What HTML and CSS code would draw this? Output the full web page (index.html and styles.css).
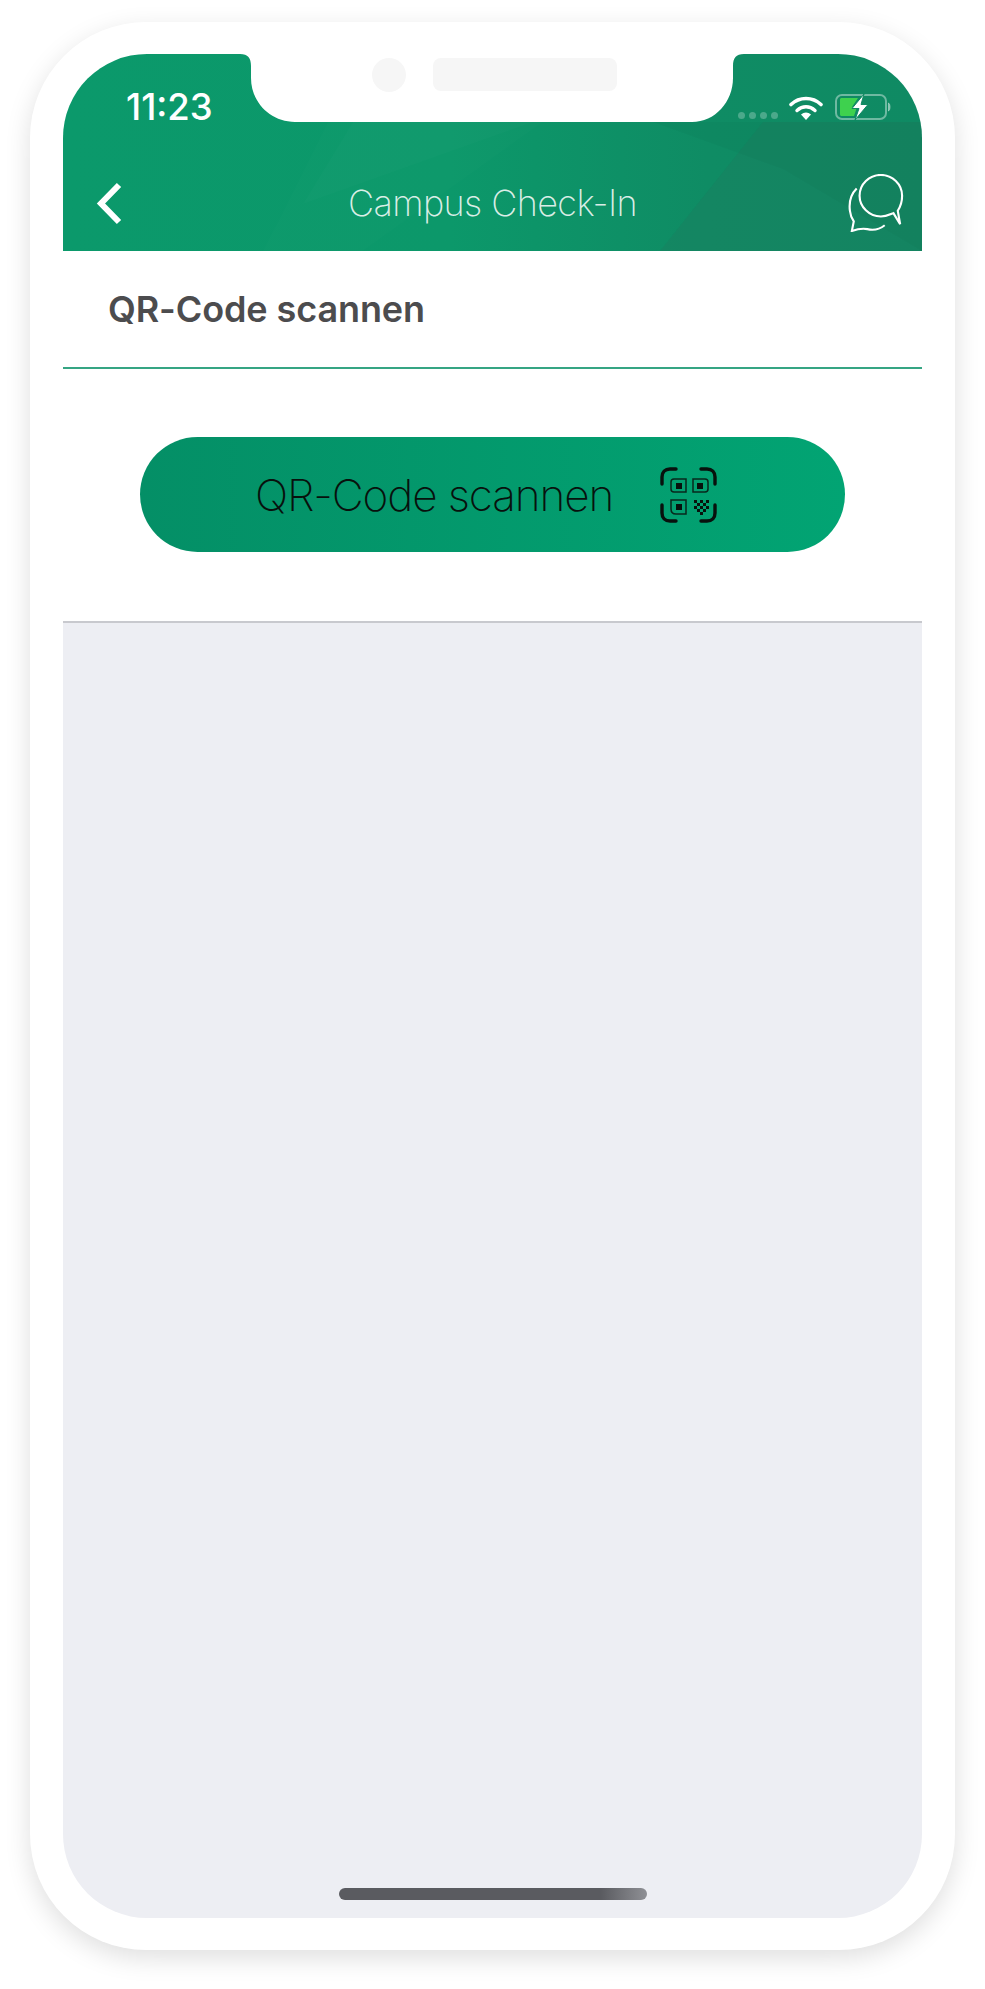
FILE: index.html
```html
<!DOCTYPE html>
<html lang="de">
<head>
    <meta charset="UTF-8">
    <title>Campus Check-In</title>
    <link rel="stylesheet" href="styles.css">
</head>
<body>
    <div class="device">
        <div class="screen">

            <!-- Header -->
            <header class="header">
                <svg class="header-bg" viewBox="0 0 859 197" preserveAspectRatio="none">
                    <polygon points="200,197 265,68 480,68 300,197" fill="#ffffff" opacity="0.012"/>
                    <polygon points="290,68 470,68 240,150" fill="#ffffff" opacity="0.015"/>
                    <polygon points="590,68 859,68 859,197 720,115" fill="#000000" opacity="0.025"/>
                    <polygon points="597,197 700,68 859,68 859,197" fill="#2a6f5a" opacity="0.2"/>
                </svg>

                <div class="status-bar">
                    <span class="time">11:23</span>
                    <div class="status-icons">
                        <div class="signal"><i></i><i></i><i></i><i></i></div>
                        <svg class="wifi" width="34" height="25" viewBox="0 0 34 25">
                            <path d="M2 9.5C10.500 1.500 23.500 1.500 32 9.500" fill="none" stroke="#fff" stroke-width="3.600" stroke-linecap="round"/>
                            <path d="M8 15.500C13.500 10.500 20.500 10.500 26 15.500" fill="none" stroke="#fff" stroke-width="3.400" stroke-linecap="round"/>
                            <path d="M12 19.500C15 16.800 19 16.800 22 19.500L17 25Z" fill="#fff"/>
                        </svg>
                        <svg class="battery" width="58" height="28" viewBox="0 0 58 28">
                            <rect x="1" y="2" width="50" height="24" rx="6" fill="none" stroke="#fff" stroke-opacity="0.4" stroke-width="2"/>
                            <path d="M53.500 10C55.500 11 55.500 17 53.500 18Z" fill="#fff" fill-opacity="0.4" stroke="#fff" stroke-opacity="0.4"/>
                            <path d="M7 5H23L17 14H22L19 23H7C5.500 23 5 22.500 5 21V7C5 5.500 5.500 5 7 5Z" fill="#3ed14e"/>
                            <path d="M29 1L17 15.500H24L20 27L33 11.500H26Z" fill="#fff" stroke="#128a64" stroke-width="1"/>
                        </svg>
                    </div>
                </div>

                <nav class="nav-bar">
                    <svg class="back" width="27" height="43" viewBox="0 0 27 43">
                        <path d="M23 3L5 21.500L23 40" fill="none" stroke="#fff" stroke-width="6"/>
                    </svg>
                    <span class="nav-title">Campus Check-In</span>
                    <svg class="chat" width="58" height="58" viewBox="0 0 60 60">
                        <path d="M10 15C4 21 2 30 3 38C3.500 43 5 46 7 49L5 59C12 56.500 16 56 21 57C27 58.500 34 57 39 53" fill="none" stroke="#fff" stroke-width="2.200"/>
                        <path d="M35 1C23 1 13 10.500 13 22.500C13 34 23 44 35 44C41 44 45 41.500 48 40.500L55 52L52.500 38C55.500 33.500 57 28 57 22.500C57 10.500 47 1 35 1Z" fill="none" stroke="#fff" stroke-width="2.200"/>
                    </svg>
                </nav>
            </header>

            <!-- Notch -->
            <div class="notch">
                <svg width="504" height="68" viewBox="0 0 504 68">
                    <path d="M0 0C8 0 11 4 11 12V24C11 48 30 68 55 68H452C475 68 493 48 493 24V12C493 4 496 0 504 0Z" fill="#fff"/>
                </svg>
                <span class="camera"></span>
                <span class="speaker"></span>
            </div>

            <div class="page-title">QR-Code scannen</div>

            <section class="scan-section">
                <button class="scan-button">
                    <span>QR-Code scannen</span>
                    <svg class="qr" width="57" height="56" viewBox="0 0 57 56">
                        <g fill="none" stroke="#08110d" stroke-width="3.400" stroke-linecap="round">
                            <path d="M2 17V10C2 5 5 2 10 2H16"/>
                            <path d="M41 2H47C52 2 55 5 55 10V17"/>
                            <path d="M2 38V46C2 51 5 54 10 54H16"/>
                            <path d="M41 54H47C52 54 55 51 55 46V38"/>
                        </g>
                        <g fill="none" stroke="#08281c" stroke-width="1.500">
                            <path d="M14 12H26V25H14C12 25 11 24 11 22V15C11 13 12 12 14 12Z"/>
                            <path d="M33 12H45C47 12 48 13 48 15V22C48 24 47 25 45 25H33Z"/>
                            <path d="M11 33H26V47H16C13 47 11 45 11 42Z"/>
                        </g>
                        <g fill="#08110d">
                            <rect x="16" y="16" width="6" height="6"/>
                            <rect x="37" y="16" width="6" height="6"/>
                            <rect x="16" y="37" width="6" height="6"/>
                            <rect x="34" y="33" width="3" height="3"/><rect x="40" y="33" width="3" height="3"/><rect x="46" y="33" width="3" height="3"/>
                            <rect x="37" y="36" width="3" height="3"/><rect x="43" y="36" width="3" height="3"/>
                            <rect x="34" y="39" width="3" height="3"/><rect x="40" y="39" width="3" height="3"/><rect x="46" y="39" width="3" height="3"/>
                            <rect x="37" y="42" width="3" height="3"/><rect x="43" y="42" width="3" height="3"/>
                            <rect x="40" y="45" width="3" height="3"/>
                        </g>
                    </svg>
                </button>
            </section>

            <div class="content">
                <div class="home-indicator"></div>
            </div>

        </div>
    </div>
</body>
</html>
```

FILE: styles.css
```css
/* General Styling */
body {
    margin: 0;
    padding: 22px 30px 39px;
    background-color: #fff;
    font-family: "Inter", "Liberation Sans", sans-serif;
}

/* Phone frame */
.device {
    height: 1928px;
    box-sizing: border-box;
    padding: 32px 33px;
    background-color: #fff;
    border-radius: 116px;
    box-shadow: 0 8px 26px rgba(0, 0, 0, 0.13);
}

.screen {
    position: relative;
    display: flex;
    flex-direction: column;
    height: 100%;
    overflow: hidden;
    background-color: #fff;
    border-radius: 84px;
}

/* Header */
.header {
    position: relative;
    height: 197px;
    flex-shrink: 0;
    background: linear-gradient(90deg, #0b996b 0%, #0c986a 45%, #0f8c64 75%, #0f8a63 100%);
    color: #fff;
}

.header-bg {
    position: absolute;
    top: 0;
    left: 0;
    width: 100%;
    height: 100%;
}

.status-bar {
    position: relative;
    display: flex;
    justify-content: space-between;
    align-items: center;
    height: 68px;
    box-sizing: border-box;
    padding: 38px 29px 0 63px;
}

.time {
    font-size: 36.500px;
    font-weight: 500;
    line-height: 30px;
}

.status-icons {
    display: flex;
    align-items: center;
    gap: 12px;
}

.signal {
    display: flex;
    gap: 4px;
    margin-top: 16px;
    margin-right: -1px;
}

.signal i {
    width: 7px;
    height: 7px;
    border-radius: 50%;
    background-color: rgba(255, 255, 255, 0.25);
}

.nav-bar {
    position: relative;
    display: flex;
    justify-content: space-between;
    align-items: center;
    height: 129px;
    box-sizing: border-box;
    padding: 33px 17px 0 33px;
}

.nav-title {
    margin-left: 15px;
    font-size: 36px;
    font-weight: 200;
    letter-spacing: -0.6px;
    color: rgba(255, 255, 255, 0.85);
}

/* Notch */
.notch {
    position: absolute;
    top: 0;
    left: 177px;
    width: 504px;
    height: 68px;
}

.notch svg {
    display: block;
}

.camera {
    position: absolute;
    top: 4px;
    left: 132px;
    width: 34px;
    height: 34px;
    border-radius: 50%;
    background-color: #f6f6f6;
}

.speaker {
    position: absolute;
    top: 4px;
    left: 193px;
    width: 184px;
    height: 33px;
    border-radius: 8px;
    background-color: #f6f6f6;
}

/* Title row */
.page-title {
    flex-shrink: 0;
    height: 118px;
    box-sizing: border-box;
    padding: 38px 0 0 45px;
    border-bottom: 2px solid #35a583;
    font-size: 36px;
    font-weight: 600;
    line-height: 40px;
    letter-spacing: -0.1px;
    color: #4c4c4e;
}

/* Scan button */
.scan-section {
    flex-shrink: 0;
    height: 254px;
    box-sizing: border-box;
    padding: 68px 77px 0;
    border-bottom: 2px solid #c8c9ce;
}

.scan-button {
    display: flex;
    justify-content: center;
    align-items: center;
    gap: 47px;
    width: 100%;
    height: 115px;
    padding: 0 13px 0 0;
    border: none;
    border-radius: 58px;
    background: linear-gradient(90deg, #048f66, #02a473);
    font-family: inherit;
    font-size: 44px;
    font-weight: 200;
    letter-spacing: -1.100px;
    color: #08110d;
}

/* Empty area */
.content {
    display: flex;
    flex: 1;
    align-items: flex-end;
    justify-content: center;
    padding-bottom: 18px;
    background-color: #edeef3;
}

.home-indicator {
    width: 308px;
    height: 12px;
    border-radius: 6px;
    background: linear-gradient(90deg, #5a5b60 0%, #5a5b60 85%, #8f9095 100%);
}
```
